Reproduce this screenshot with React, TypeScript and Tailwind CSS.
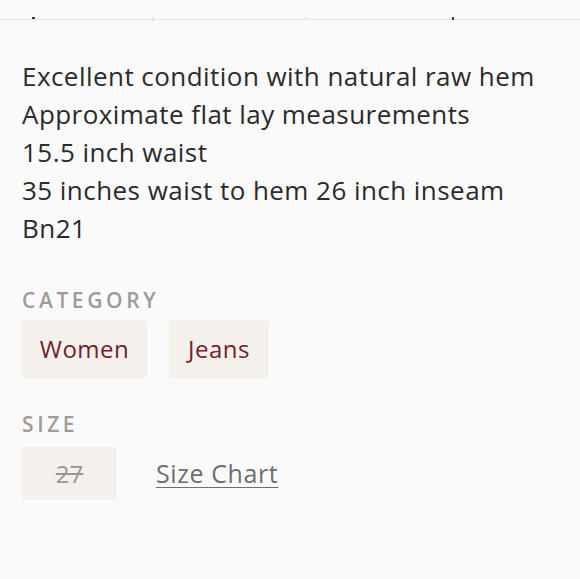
export default function App() {
  const lines = [
    "Excellent condition with natural raw hem",
    "Approximate flat lay measurements",
    "15.5 inch waist",
    "35 inches waist to hem 26 inch inseam",
    "Bn21",
  ];

  const ticks = [
    "ml-[32px] w-[3px] h-[2px] bg-[#333]",
    "ml-[117px] w-[2px] h-[4px] bg-[#e2e2e2]",
    "ml-[151px] w-[2px] h-[2px] bg-[#e2e2e2]",
    "ml-[145px] w-[2px] h-[3px] bg-[#7a2433]",
  ];

  return (
    <div
      className="w-[580px] h-[579px] overflow-hidden bg-[#fafafa] text-[#2b2b2b]"
      style={{ fontFamily: "'Open Sans', Lato, sans-serif" }}
    >
      {/* cut-off strip from the section above */}
      <div className="h-[22px] flex items-start pt-[17px]">
        {ticks.map((t) => (
          <span key={t} className={t} />
        ))}
      </div>
      <div className="-mt-[3px] border-b border-[#e6e6e6]" />

      <div className="px-[22px] pt-[37px]">
        <div className="text-[26px] leading-[38px] tracking-[0.45px]">
          {lines.map((l) => (
            <div key={l}>{l}</div>
          ))}
        </div>

        <div className="mt-[40px] text-[21px] leading-[26px] tracking-[3.6px] text-[#a09b96] font-semibold">
          CATEGORY
        </div>
        <div className="mt-[7px] flex gap-[22px]">
          <div className="h-[58px] w-[125px] flex items-center justify-center rounded-[4px] bg-[#f4f1ed] text-[24px] tracking-[0.5px] text-[#74202c]">
            Women
          </div>
          <div className="h-[58px] w-[100px] flex items-center justify-center rounded-[4px] bg-[#f4f1ed] text-[24px] tracking-[0.5px] text-[#74202c]">
            Jeans
          </div>
        </div>

        <div className="mt-[33px] text-[21px] leading-[26px] tracking-[3.6px] text-[#a09b96] font-semibold">
          SIZE
        </div>
        <div className="mt-[10px] flex items-center gap-[39px]">
          <div className="h-[53px] w-[95px] flex items-center justify-center rounded-[4px] bg-[#f4f1ed] text-[24px] text-[#9b9691] line-through">
            27
          </div>
          <a className="text-[25px] tracking-[0.6px] text-[#6e6e6e] underline underline-offset-[4px] decoration-1">
            Size Chart
          </a>
        </div>
      </div>
    </div>
  );
}
